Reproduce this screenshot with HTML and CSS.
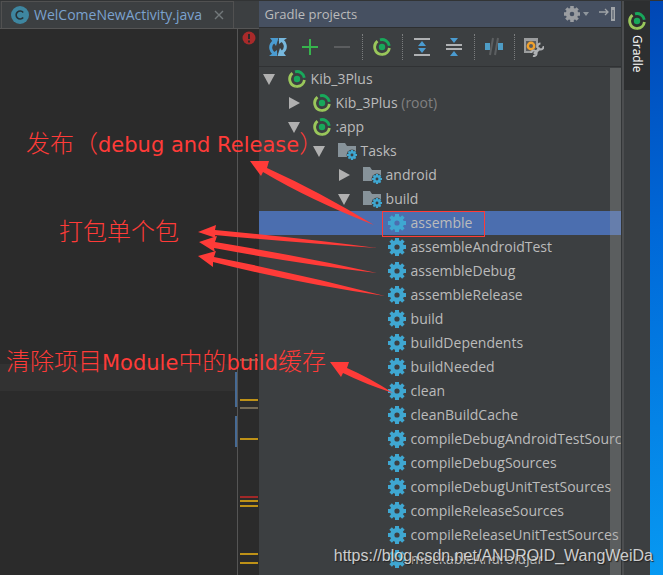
FILE: index.html
```html
<!DOCTYPE html>
<html lang="zh-CN">
<head>
<meta charset="utf-8">
<title>Gradle projects</title>
<link rel="stylesheet" href="styles.css">
</head>
<body>
<svg class="defs" aria-hidden="true">
  <symbol id="gear" viewBox="0 0 18 18">
    <circle cx="9" cy="9" r="4.8" fill="none" stroke="currentColor" stroke-width="4.4"/>
    <path d="M9 0v4M9 14v4M0 9h4M14 9h4" stroke="currentColor" stroke-width="4"/>
    <path d="M2.6 2.6l3 3M12.4 12.4l3 3M15.4 2.6l-3 3M5.6 12.4l-3 3" stroke="currentColor" stroke-width="3.6"/>
  </symbol>
  <symbol id="gradle" viewBox="0 0 18 18">
    <circle cx="9" cy="9" r="3.2" fill="#18a85b"/>
    <path d="M7 1.8A7.4 7.4 0 0 1 16.3 7.8" fill="none" stroke="#18a85b" stroke-width="2.8"/>
    <path d="M16.4 10A7.4 7.4 0 0 1 9.5 16.4M7.8 16.3A7.4 7.4 0 0 1 4.5 3.2" fill="none" stroke="#9ac75b" stroke-width="2.8"/>
    <path d="M7.500 16.4h2.500" stroke="#9ac75b" stroke-width="2.6"/>
  </symbol>
  <symbol id="folder" viewBox="0 0 20 18">
    <path d="M0 1h7l2 3h9v11H0z" fill="#87939a"/>
    <circle cx="14" cy="13" r="5.4" fill="#3c3f41"/>
    <svg x="9" y="8" width="10" height="10" viewBox="0 0 18 18" color="#3fa7d1"><use href="#gear"/></svg>
  </symbol>
  <symbol id="open" viewBox="0 0 12 12"><path d="M0 1h12L6 12z" fill="#b0b0b0"/></symbol>
  <symbol id="closed" viewBox="0 0 12 12"><path d="M1 0v12L12 6z" fill="#b0b0b0"/></symbol>
</svg>
<div class="ide">
  <main class="editor">
    <div class="tabs">
      <div class="tab">
        <svg class="class-icon" viewBox="0 0 18 18"><circle cx="9" cy="9" r="9" fill="#3e86a0"/><path d="M12.2 6.4A4 4 0 1 0 12.2 11.6" fill="none" stroke="#263238" stroke-width="1.6"/></svg>
        <span>WelComeNewActivity.java</span>
        <button class="close" aria-label="Close tab"><svg viewBox="0 0 10 10"><path d="M1 1l8 8M9 1l-8 8" stroke="#73797b" stroke-width="1.4"/></svg></button>
      </div>
    </div>
    <div class="code">
      <div class="text-area"><div class="current-line"></div></div>
      <div class="gutter">
        <svg viewBox="0 0 23 546" preserveAspectRatio="xMinYMin slice">
          <path d="M2.500 0V546" stroke="#555"/>
          <path d="M1 343v35M1 387v31" stroke="#466a94" stroke-width="2"/>
          <circle cx="14" cy="9" r="6.500" fill="#a82a2a"/>
          <path d="M14 5v5M14 11.500v2" stroke="#2b2b2b" stroke-width="2"/>
          <path d="M5 331h18M5 379h18" stroke="#756b56" stroke-width="2"/>
          <path d="M5 371h18M5 410h18M5 472h18M5 477h18M5 525h18M5 534h18" stroke="#be9117" stroke-width="2"/>
          <path d="M5 468h18" stroke="#a12828" stroke-width="2"/>
        </svg>
      </div>
    </div>
  </main>
  <section class="panel">
    <header class="panel-head">
      <h1>Gradle projects</h1>
      <button class="settings" aria-label="Settings"><svg class="gear-gray" viewBox="0 0 18 18"><use href="#gear"/></svg><svg class="caret" viewBox="0 0 6 4"><path d="M0 0h6L3 4z" fill="#8f969c"/></svg></button>
      <button aria-label="Hide"><svg class="hide" viewBox="0 0 16 14"><path d="M0 5h9M6 2l3 3-3 3" fill="none" stroke="#a0a4a8" stroke-width="1.300"/><path d="M12 0h4v14h-4z" fill="#a0a4a8"/><path d="M14 3v9" stroke="#465061" stroke-width="1"/></svg></button>
    </header>
    <div class="toolbar">
      <button aria-label="Refresh"><svg viewBox="0 0 20 20"><path d="M9 17.500C3 16.500 0 9 6 4.500" fill="none" stroke="#4a9bd0" stroke-width="3"/><path d="M2 1h8.500L8 9z" fill="#4a9bd0"/><path d="M1 19h8v-6z" fill="#4a9bd0"/><path d="M11 2.500c6 1 9 8.500 3 13" fill="none" stroke="#77b8dd" stroke-width="3"/><path d="M18 19H9.500L12 11z" fill="#77b8dd"/><path d="M19 1h-8v6z" fill="#77b8dd"/></svg></button>
      <button aria-label="Add"><svg viewBox="0 0 20 20"><path d="M10 2v16M2 10h16" stroke="#37b34d" stroke-width="2"/></svg></button>
      <button aria-label="Remove"><svg viewBox="0 0 20 20"><path d="M2 10h16" stroke="#5b5d5f" stroke-width="2"/></svg></button>
      <i class="sep"></i>
      <button aria-label="Run Gradle task"><svg viewBox="-1 -1 20 20"><use href="#gradle" width="18" height="18"/></svg></button>
      <i class="sep"></i>
      <button aria-label="Expand all"><svg viewBox="0 0 20 20"><path d="M2 2h16M2 18h16" stroke="#afb1b3" stroke-width="2"/><path d="M6 9h8l-4-5zM6 11h8l-4 5z" fill="#4a9bd0"/></svg></button>
      <button aria-label="Collapse all"><svg viewBox="0 0 20 20"><path d="M2 8h16M2 12h16" stroke="#afb1b3" stroke-width="2"/><path d="M6 1h8l-4 5zM6 19h8l-4-5z" fill="#4a9bd0"/></svg></button>
      <i class="sep"></i>
      <button aria-label="Toggle offline mode"><svg viewBox="0 0 20 20"><path d="M1 6h5v7H1zM14 6h5v7h-5z" fill="#4e9cc5"/><path d="M9 1L6 18M14 1l-3 17" stroke="#5c5f61" stroke-width="2"/></svg></button>
      <i class="sep"></i>
      <button aria-label="Gradle settings"><svg viewBox="0 0 20 20"><path d="M0 1h14v15H0z" fill="#9b9d9e"/><path d="M2 4h10v10H2z" fill="#595b5d"/><circle cx="7" cy="9" r="3.200" fill="none" stroke="#f0a12d" stroke-width="2.400"/><path d="M10 17l6-6" stroke="#3c3f41" stroke-width="5"/><path d="M10 17l6-6" stroke="#afb1b3" stroke-width="2.600"/><path d="M19.500 9a3 3 0 1 1-3-2.500" fill="none" stroke="#afb1b3" stroke-width="2"/><path d="M7 16a2.800 2.800 0 1 1 2 3" fill="none" stroke="#afb1b3" stroke-width="2"/></svg></button>
    </div>
    <div class="tree-wrap">
      <ul class="tree">
        <li class="l0"><svg class="arrow"><use href="#open"/></svg><svg class="icon"><use href="#gradle"/></svg>Kib_3Plus</li>
        <li class="l1"><svg class="arrow"><use href="#closed"/></svg><svg class="icon"><use href="#gradle"/></svg>Kib_3Plus <span class="dim">(root)</span></li>
        <li class="l1"><svg class="arrow"><use href="#open"/></svg><svg class="icon"><use href="#gradle"/></svg>:app</li>
        <li class="l2"><svg class="arrow"><use href="#open"/></svg><svg class="icon folder"><use href="#folder"/></svg>Tasks</li>
        <li class="l3"><svg class="arrow"><use href="#closed"/></svg><svg class="icon folder"><use href="#folder"/></svg>android</li>
        <li class="l3"><svg class="arrow"><use href="#open"/></svg><svg class="icon folder"><use href="#folder"/></svg>build</li>
        <li class="leaf selected"><svg class="icon"><use href="#gear"/></svg>assemble</li>
        <li class="leaf"><svg class="icon"><use href="#gear"/></svg>assembleAndroidTest</li>
        <li class="leaf"><svg class="icon"><use href="#gear"/></svg>assembleDebug</li>
        <li class="leaf"><svg class="icon"><use href="#gear"/></svg>assembleRelease</li>
        <li class="leaf"><svg class="icon"><use href="#gear"/></svg>build</li>
        <li class="leaf"><svg class="icon"><use href="#gear"/></svg>buildDependents</li>
        <li class="leaf"><svg class="icon"><use href="#gear"/></svg>buildNeeded</li>
        <li class="leaf"><svg class="icon"><use href="#gear"/></svg>clean</li>
        <li class="leaf"><svg class="icon"><use href="#gear"/></svg>cleanBuildCache</li>
        <li class="leaf"><svg class="icon"><use href="#gear"/></svg>compileDebugAndroidTestSources</li>
        <li class="leaf"><svg class="icon"><use href="#gear"/></svg>compileDebugSources</li>
        <li class="leaf"><svg class="icon"><use href="#gear"/></svg>compileDebugUnitTestSources</li>
        <li class="leaf"><svg class="icon"><use href="#gear"/></svg>compileReleaseSources</li>
        <li class="leaf"><svg class="icon"><use href="#gear"/></svg>compileReleaseUnitTestSources</li>
        <li class="leaf"><svg class="icon"><use href="#gear"/></svg>mockableAndroidJar</li>
      </ul>
      <div class="scrollbar"></div>
    </div>
  </section>
  <aside class="stripe">
    <button class="side-tab"><svg><use href="#gradle"/></svg><span>Gradle</span></button>
  </aside>
  <div class="desktop"></div>
</div>
<svg class="marks" viewBox="0 0 663 575" aria-hidden="true">
  <g fill="#ff3b38">
    <path d="M250 161L269 161L267 168Q320 192 374 225Q310 200 263 172L261 176z"/>
    <path d="M198 232L216 225L215 230Q300 238 377 248Q300 243 215 235L216 238z"/>
    <path d="M199 242L217 236L215 242Q300 256 377 273Q300 264 214 248L215 252z"/>
    <path d="M198 256L216 251L214 257Q300 274 385 296Q300 284 213 262L213 267z"/>
    <path d="M330 362L349 362L347 368Q370 378 393 393Q365 384 343 373L341 377z"/>
  </g>
  <rect x="382.500" y="211.500" width="102" height="25" fill="none" stroke="#ff3b38"/>
</svg>
<p class="note publish">发布（<b>debug and Release</b>）</p>
<p class="note package">打包单个包</p>
<p class="note clear">清除项目<b>Module</b>中的<b>build</b>缓存</p>
<p class="watermark">https://blog.csdn.net/ANDROID_WangWeiDa</p>
</body>
</html>
```
FILE: styles.css
```css
* { box-sizing: border-box; }
body {
  margin: 0;
  background: #3c3f41;
  color: #bbbbbb;
  font: 14px/24px "Open Sans", "Noto Sans", sans-serif;
  overflow: hidden;
}
.defs { position: absolute; width: 0; height: 0; }
svg { display: block; flex: none; }
button {
  display: flex;
  align-items: center;
  padding: 0;
  border: 0;
  background: none;
  color: inherit;
  font: inherit;
}
.ide { display: flex; height: 100vh; border-top: 1px solid #323435; }

.editor { flex: 259 1 0; min-width: 0; display: flex; flex-direction: column; background: #2b2b2b; }
.tabs { display: flex; height: 28px; background: #3c3f41; border-bottom: 1px solid #555; }
.tab {
  display: flex;
  align-items: center;
  gap: 5px;
  margin-left: 1px;
  padding: 0 9px;
  border: solid #515151;
  border-width: 1px 1px 0;
  color: #7ba2cf;
  white-space: nowrap;
}
.class-icon { width: 18px; height: 18px; }
.close { margin-left: 7px; }
.close svg { width: 10px; height: 10px; }
.code { flex: 1; display: flex; min-height: 0; }
.text-area { flex: 1; padding-top: 335px; }
.current-line { height: 27px; background: #323232; }
.gutter { width: 24px; overflow: hidden; }
.gutter svg { width: 23px; height: 546px; }

.panel { flex: 363 1 0; min-width: 0; display: flex; flex-direction: column; border-right: 1px solid #333638; }
.panel-head {
  display: flex;
  align-items: center;
  gap: 10px;
  height: 27px;
  padding: 0 6px;
  background: #465061;
  border-bottom: 1px solid #2d2f31;
}
.panel-head h1 { flex: 1; margin: 0; font-size: 13px; font-weight: 400; }
.settings { gap: 3px; }
.gear-gray { width: 16px; height: 16px; color: #9a9da1; }
.caret { width: 6px; height: 4px; }
.hide { width: 16px; height: 14px; }
.toolbar {
  display: flex;
  align-items: center;
  gap: 12px;
  height: 39px;
  padding: 0 9px;
  border-bottom: 1px solid #303234;
}
.toolbar svg { width: 20px; height: 20px; }
.sep { height: 26px; margin: 0 -3px 0 -2px; border-left: 1px dotted #7b7d7e; }

.tree-wrap { position: relative; flex: 1; min-height: 0; overflow: hidden; }
.tree { margin: 0; padding: 0; list-style: none; }
.tree li { display: flex; align-items: center; gap: 5px; height: 24px; white-space: pre; }
.arrow { width: 12px; height: 12px; margin-right: 8px; }
.icon { width: 18px; height: 18px; color: #3fa7d1; }
.folder { width: 20px; margin-right: -2px; }
.dim { margin-left: -5px; color: #808080; }
.tree .l0 { padding-left: 4px; }
.tree .l1 { padding-left: 29px; }
.tree .l2 { padding-left: 54px; }
.tree .l3 { padding-left: 79px; }
.tree .leaf { padding-left: 129px; }
.tree .selected { background: #4b6eaf; }
.scrollbar { position: absolute; top: 1px; right: 0; bottom: 0; width: 11px; background: rgba(166, 166, 166, .3); }

.stripe { flex: none; width: 28px; border-left: 2px solid #4c4e50; }
.side-tab {
  flex-direction: column;
  gap: 5px;
  width: 100%;
  height: 89px;
  padding-top: 11px;
  background: #2d2f30;
  color: #ffffff;
  font-size: 12px;
}
.side-tab svg { width: 18px; height: 18px; }
.side-tab span { writing-mode: vertical-rl; line-height: 20px; }
.desktop { flex: none; width: 13px; background: linear-gradient(#0047b5, #0068d8 40%, #0799f2); }

.marks { position: absolute; top: 0; left: 0; width: 663px; height: 575px; }
.note {
  position: absolute;
  margin: 0;
  color: #ff3b38;
  font: 300 24px/30px "Noto Sans CJK SC", sans-serif;
  white-space: nowrap;
}
.note b { font-family: "DejaVu Sans", sans-serif; font-size: 21px; font-weight: 400; }
.publish { left: 26px; top: 127px; }
.package { left: 59px; top: 215px; }
.clear { left: 6px; top: 345px; }
.watermark {
  position: absolute;
  right: 10px;
  bottom: 8px;
  margin: 0;
  color: rgba(235, 235, 235, .85);
  font: 16px/22px "Liberation Sans", Arial, sans-serif;
  text-shadow: 1px 1px 1px #222;
}
```
